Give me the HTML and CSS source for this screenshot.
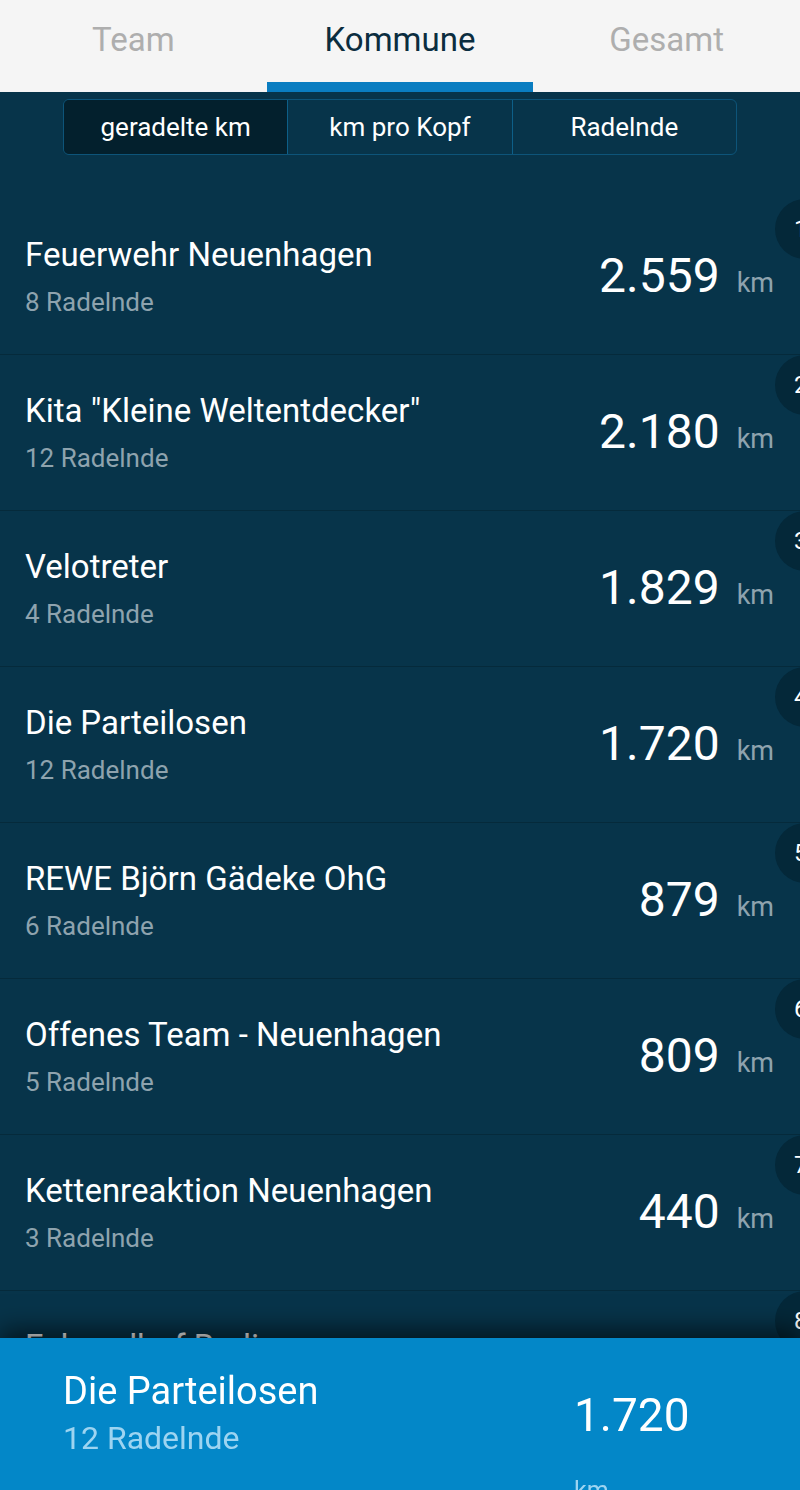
FILE: index.html
```html
<!DOCTYPE html>
<html lang="de">
<head>
    <meta charset="UTF-8">
    <meta name="viewport" content="width=device-width, initial-scale=1.0">
    <title>Rangliste</title>
    <link rel="stylesheet" href="styles.css">
</head>
<body>
    <header class="tabs">
        <div class="tab">Team</div>
        <div class="tab tab_aktiv">Kommune</div>
        <div class="tab">Gesamt</div>
    </header>

    <div class="inhalt">
        <div class="segmente">
            <div class="segment segment_aktiv">geradelte km</div>
            <div class="segment">km pro Kopf</div>
            <div class="segment">Radelnde</div>
        </div>

        <div class="liste">
            <div class="zeile">
                <div class="info">
                    <p class="name">Feuerwehr Neuenhagen</p>
                    <p class="anzahl">8 Radelnde</p>
                </div>
                <div class="wert"><span class="zahl">2.559</span><span class="einheit">km</span></div>
                <div class="platz">1</div>
            </div>
            <div class="zeile">
                <div class="info">
                    <p class="name">Kita "Kleine Weltentdecker"</p>
                    <p class="anzahl">12 Radelnde</p>
                </div>
                <div class="wert"><span class="zahl">2.180</span><span class="einheit">km</span></div>
                <div class="platz">2</div>
            </div>
            <div class="zeile">
                <div class="info">
                    <p class="name">Velotreter</p>
                    <p class="anzahl">4 Radelnde</p>
                </div>
                <div class="wert"><span class="zahl">1.829</span><span class="einheit">km</span></div>
                <div class="platz">3</div>
            </div>
            <div class="zeile">
                <div class="info">
                    <p class="name">Die Parteilosen</p>
                    <p class="anzahl">12 Radelnde</p>
                </div>
                <div class="wert"><span class="zahl">1.720</span><span class="einheit">km</span></div>
                <div class="platz">4</div>
            </div>
            <div class="zeile">
                <div class="info">
                    <p class="name">REWE Björn Gädeke OhG</p>
                    <p class="anzahl">6 Radelnde</p>
                </div>
                <div class="wert"><span class="zahl">879</span><span class="einheit">km</span></div>
                <div class="platz">5</div>
            </div>
            <div class="zeile">
                <div class="info">
                    <p class="name">Offenes Team - Neuenhagen</p>
                    <p class="anzahl">5 Radelnde</p>
                </div>
                <div class="wert"><span class="zahl">809</span><span class="einheit">km</span></div>
                <div class="platz">6</div>
            </div>
            <div class="zeile">
                <div class="info">
                    <p class="name">Kettenreaktion Neuenhagen</p>
                    <p class="anzahl">3 Radelnde</p>
                </div>
                <div class="wert"><span class="zahl">440</span><span class="einheit">km</span></div>
                <div class="platz">7</div>
            </div>
            <div class="zeile">
                <div class="info">
                    <p class="name">Fahrradhof Berlin</p>
                    <p class="anzahl">2 Radelnde</p>
                </div>
                <div class="wert"><span class="zahl">312</span><span class="einheit">km</span></div>
                <div class="platz">8</div>
            </div>
        </div>
    </div>

    <footer class="eigenes">
        <div class="eigenes_info">
            <p class="eigenes_name">Die Parteilosen</p>
            <p class="eigenes_anzahl">12 Radelnde</p>
        </div>
        <div class="eigenes_wert">
            <p class="eigenes_zahl">1.720</p>
            <p class="eigenes_einheit">km</p>
        </div>
    </footer>
</body>
</html>
```

FILE: styles.css
```css
* {
    margin: 0;
    padding: 0;
    box-sizing: border-box;
}
body {
    width: 800px;
    height: 1490px;
    overflow: hidden;
    background-color: #07344a;
    font-family: Roboto, "Liberation Sans", Arial, sans-serif;
}

/* Reiter oben */
.tabs {
    display: flex;
    height: 92px;
    background-color: #f5f5f5;
}
.tab {
    flex: 1;
    text-align: center;
    font-size: 33px;
    line-height: 80px;
    color: #aeaeae;
    border-bottom: 10px solid transparent;
}
.tab_aktiv {
    color: #0b2d3f;
    border-bottom-color: #0a7dc1;
}

/* Umschalter */
.inhalt {
    padding-top: 7px;
}
.segmente {
    display: flex;
    width: 674px;
    height: 56px;
    margin-left: 63px;
    border: 1px solid #0d5479;
    border-radius: 6px;
    overflow: hidden;
}
.segment {
    flex: 1;
    text-align: center;
    color: white;
    font-size: 26px;
    line-height: 54px;
    border-left: 1px solid #0d5f88;
}
.segment:first-child {
    border-left: none;
}
.segment_aktiv {
    background-color: #03202d;
}

/* Liste */
.liste {
    padding-top: 44px;
}
.zeile {
    position: relative;
    display: flex;
    align-items: center;
    height: 156px;
    padding: 0 26px 0 25px;
    border-bottom: 1px solid #052a3b;
}
.info {
    flex: 1;
}
.name {
    color: white;
    font-size: 33px;
    line-height: 36px;
}
.anzahl {
    margin-top: 14px;
    color: #8ea3ae;
    font-size: 26px;
    line-height: 30px;
}
.wert {
    display: flex;
    align-items: baseline;
    padding-bottom: 2px;
}
.zahl {
    color: white;
    font-size: 48px;
}
.einheit {
    margin-left: 17px;
    color: #8ea3ae;
    font-size: 27px;
}
.platz {
    position: absolute;
    top: 0;
    right: -35px;
    width: 60px;
    height: 60px;
    border-radius: 50%;
    background-color: #042839;
    color: white;
    font-size: 24px;
    line-height: 60px;
    padding-left: 19px;
}

/* eigenes Team unten */
.eigenes {
    position: fixed;
    left: 0;
    bottom: 0;
    display: flex;
    width: 800px;
    height: 152px;
    padding: 33px 0 0 63px;
    background-color: #0387c8;
    box-shadow: 0 -8px 24px rgba(0, 0, 0, 0.6);
}
.eigenes_info {
    flex: 1;
}
.eigenes_name {
    color: white;
    font-size: 38px;
    line-height: 40px;
}
.eigenes_anzahl {
    margin-top: 9px;
    color: #9dd4f1;
    font-size: 32px;
    line-height: 36px;
}
.eigenes_wert {
    width: 226px;
    padding-top: 16px;
}
.eigenes_zahl {
    color: white;
    font-size: 46px;
    line-height: 56px;
}
.eigenes_einheit {
    margin-top: 33px;
    color: #9dd4f1;
    font-size: 25px;
    line-height: 30px;
}
```
